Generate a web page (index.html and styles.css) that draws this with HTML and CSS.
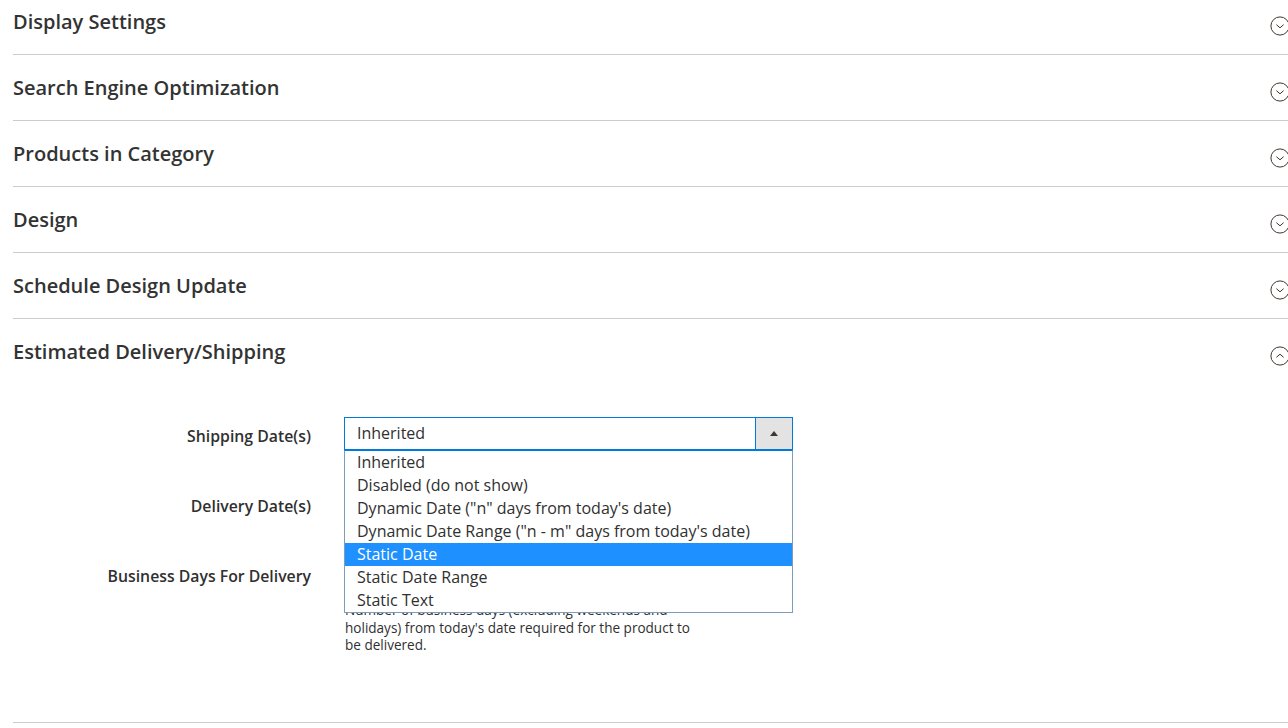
FILE: index.html
```html
<!DOCTYPE html>
<html>
<head>
  <title>Category - Estimated Delivery</title>
  <link rel="stylesheet" href="styles.css">
</head>
<body>
  <div class="page">

    <div class="block">
      <div class="block-title">
        <span>Display Settings</span>
        <svg class="toggle" width="20" height="20" viewBox="0 0 22 22"><circle cx="11" cy="11" r="10"/><path d="M7 9.5 L11 13 L15 9.5"/></svg>
      </div>
    </div>

    <div class="block">
      <div class="block-title">
        <span>Search Engine Optimization</span>
        <svg class="toggle" width="20" height="20" viewBox="0 0 22 22"><circle cx="11" cy="11" r="10"/><path d="M7 9.5 L11 13 L15 9.5"/></svg>
      </div>
    </div>

    <div class="block">
      <div class="block-title">
        <span>Products in Category</span>
        <svg class="toggle" width="20" height="20" viewBox="0 0 22 22"><circle cx="11" cy="11" r="10"/><path d="M7 9.5 L11 13 L15 9.5"/></svg>
      </div>
    </div>

    <div class="block">
      <div class="block-title">
        <span>Design</span>
        <svg class="toggle" width="20" height="20" viewBox="0 0 22 22"><circle cx="11" cy="11" r="10"/><path d="M7 9.5 L11 13 L15 9.5"/></svg>
      </div>
    </div>

    <div class="block">
      <div class="block-title">
        <span>Schedule Design Update</span>
        <svg class="toggle" width="20" height="20" viewBox="0 0 22 22"><circle cx="11" cy="11" r="10"/><path d="M7 9.5 L11 13 L15 9.5"/></svg>
      </div>
    </div>

    <div class="block open">
      <div class="block-title">
        <span>Estimated Delivery/Shipping</span>
        <svg class="toggle" width="20" height="20" viewBox="0 0 22 22"><circle cx="11" cy="11" r="10"/><path d="M7 12.5 L11 9 L15 12.5"/></svg>
      </div>

      <div class="block-content">
        <div class="field">
          <label class="field-label">Shipping Date(s)</label>
          <div class="control">
            <div class="select focused">
              <span class="select-value">Inherited</span>
              <span class="select-arrow"><span class="arrow-up"></span></span>
            </div>
            <ul class="options">
              <li>Inherited</li>
              <li>Disabled (do not show)</li>
              <li>Dynamic Date ("n" days from today's date)</li>
              <li>Dynamic Date Range ("n - m" days from today's date)</li>
              <li class="selected">Static Date</li>
              <li>Static Date Range</li>
              <li>Static Text</li>
            </ul>
          </div>
        </div>

        <div class="field">
          <label class="field-label">Delivery Date(s)</label>
          <div class="control">
            <div class="select">
              <span class="select-value">Inherited</span>
              <span class="select-arrow"><span class="arrow-down"></span></span>
            </div>
          </div>
        </div>

        <div class="field">
          <label class="field-label">Business Days For Delivery</label>
          <div class="control">
            <input class="text-input" type="text">
            <div class="note">Number of business days (excluding weekends and holidays) from today's date required for the product to be delivered.</div>
          </div>
        </div>
      </div>
    </div>

  </div>
</body>
</html>
```

FILE: styles.css
```css
html, body {
  margin: 0;
  padding: 0;
  overflow: hidden;
  background-color: #ffffff;
}

body {
  font-family: "Open Sans", "Noto Sans", sans-serif;
  color: #303030;
}

.page {
  padding-left: 13px;
  margin-top: -11px;
  margin-right: -2px;
}

.block {
  border-bottom: 1px solid #cccccc;
}

.block-title {
  display: flex;
  justify-content: space-between;
  align-items: flex-start;
  padding: 19px 0 18px 0;
  font-size: 20px;
  font-weight: 600;
  line-height: 28px;
  color: #333333;
}

.toggle {
  margin-top: 8px;
  fill: none;
  stroke: #41362f;
  stroke-width: 1.1;
}

.block-content {
  padding: 33px 0 67px 0;
}

.field {
  display: grid;
  grid-template-columns: 298px 449px;
  column-gap: 33px;
  margin-bottom: 37px;
}

.field:last-child {
  margin-bottom: 0;
}

.field-label {
  text-align: right;
  font-size: 15.8px;
  font-weight: 600;
  line-height: 19px;
  padding-top: 10px;
  color: #303030;
}

.control {
  position: relative;
}

.select {
  display: flex;
  height: 33px;
  box-sizing: border-box;
  border: 1px solid #adadad;
  background-color: #ffffff;
}

.select.focused {
  border-color: #007bdb;
}

.select-value {
  flex: 1;
  padding-left: 12px;
  font-size: 16px;
  line-height: 31px;
  color: #303030;
}

.select-arrow {
  width: 36px;
  display: flex;
  align-items: center;
  justify-content: center;
  background-color: #e3e3e3;
  border-left: 1px solid #adadad;
}

.focused .select-arrow {
  border-left-color: #007bdb;
}

.arrow-up {
  width: 0;
  height: 0;
  border-left: 4px solid transparent;
  border-right: 4px solid transparent;
  border-bottom: 5px solid #41362f;
}

.arrow-down {
  width: 0;
  height: 0;
  border-left: 4px solid transparent;
  border-right: 4px solid transparent;
  border-top: 5px solid #41362f;
}

.options {
  position: absolute;
  top: 33px;
  left: 0;
  width: 449px;
  box-sizing: border-box;
  margin: 0;
  padding: 0;
  list-style: none;
  background-color: #ffffff;
  border: 1px solid #7f9db9;
  border-top-color: #007bdb;
  z-index: 5;
}

.options li {
  height: 23px;
  line-height: 23px;
  padding-left: 12px;
  font-size: 16px;
  color: #303030;
}

.options li.selected {
  background-color: #1e90ff;
  color: #ffffff;
}

.text-input {
  display: block;
  width: 100%;
  height: 33px;
  box-sizing: border-box;
  border: 1px solid #adadad;
  font-family: inherit;
  font-size: 14px;
}

.note {
  margin-top: 12px;
  margin-left: 1px;
  max-width: 350px;
  font-size: 13.55px;
  line-height: 17.5px;
  color: #303030;
}
```
